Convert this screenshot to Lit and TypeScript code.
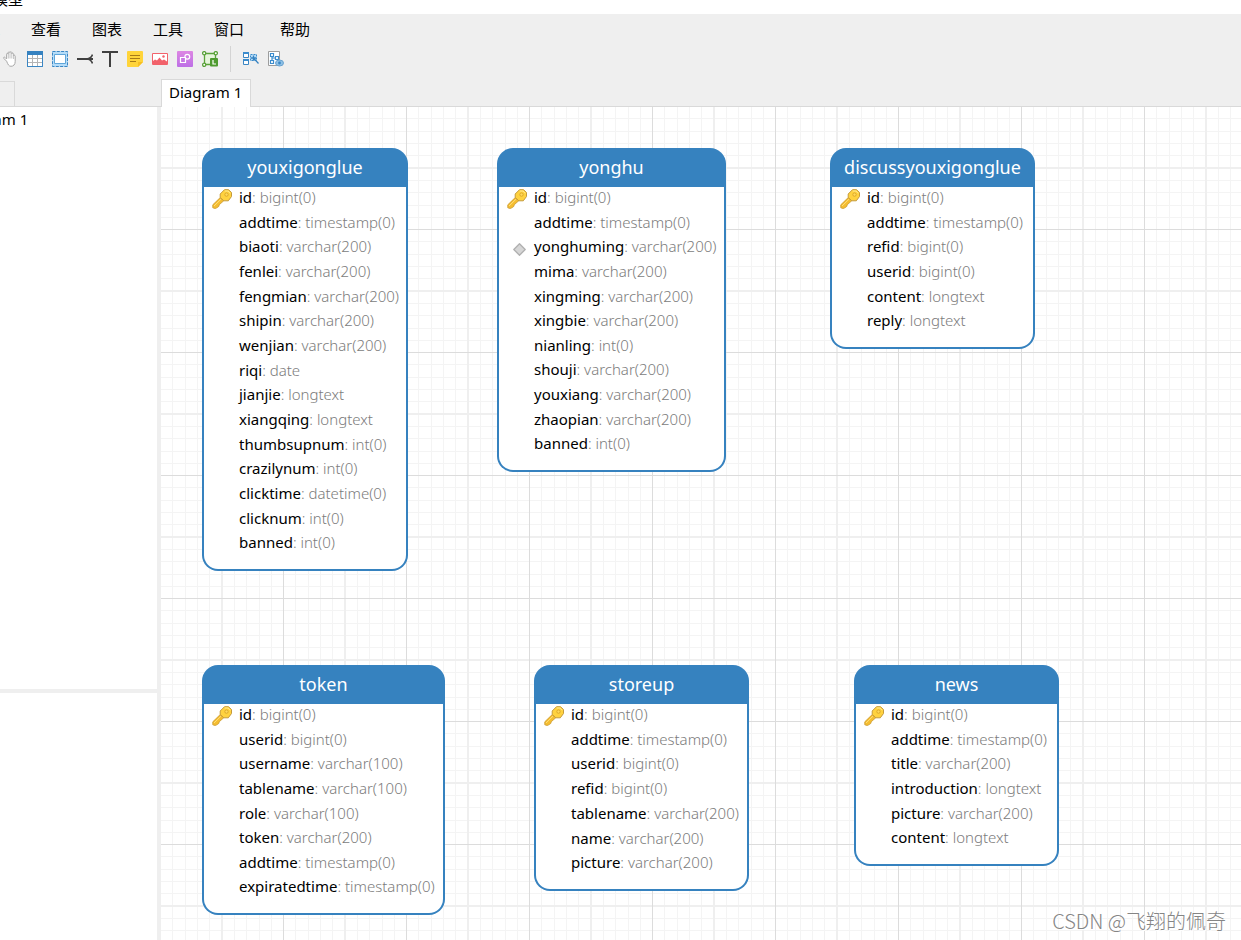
import { LitElement, html, svg, css } from "lit";
import { customElement, property } from "lit/decorators.js";
import { styleMap } from "lit/directives/style-map.js";

type Mark = "key" | "unique";
interface Field {
  name: string;
  type: string;
  mark?: Mark;
}
interface Entity {
  title: string;
  x: number;
  y: number;
  width: number;
  height: number;
  fields: Field[];
}

const fields = (text: string): Field[] =>
  text.split("|").map((part) => {
    const [name, type, mark] = part.trim().split(" ");
    return { name, type, mark: mark as Mark | undefined };
  });

const ENTITIES: Entity[] = [
  {
    title: "youxigonglue", x: 41, y: 41, width: 206, height: 423,
    fields: fields(
      "id bigint(0) key|addtime timestamp(0)|biaoti varchar(200)|fenlei varchar(200)|fengmian varchar(200)|shipin varchar(200)|wenjian varchar(200)|riqi date|jianjie longtext|xiangqing longtext|thumbsupnum int(0)|crazilynum int(0)|clicktime datetime(0)|clicknum int(0)|banned int(0)"
    ),
  },
  {
    title: "yonghu", x: 336, y: 41, width: 229, height: 324,
    fields: fields(
      "id bigint(0) key|addtime timestamp(0)|yonghuming varchar(200) unique|mima varchar(200)|xingming varchar(200)|xingbie varchar(200)|nianling int(0)|shouji varchar(200)|youxiang varchar(200)|zhaopian varchar(200)|banned int(0)"
    ),
  },
  {
    title: "discussyouxigonglue", x: 669, y: 41, width: 205, height: 201,
    fields: fields(
      "id bigint(0) key|addtime timestamp(0)|refid bigint(0)|userid bigint(0)|content longtext|reply longtext"
    ),
  },
  {
    title: "token", x: 41, y: 558, width: 243, height: 250,
    fields: fields(
      "id bigint(0) key|userid bigint(0)|username varchar(100)|tablename varchar(100)|role varchar(100)|token varchar(200)|addtime timestamp(0)|expiratedtime timestamp(0)"
    ),
  },
  {
    title: "storeup", x: 373, y: 558, width: 215, height: 226,
    fields: fields(
      "id bigint(0) key|addtime timestamp(0)|userid bigint(0)|refid bigint(0)|tablename varchar(200)|name varchar(200)|picture varchar(200)"
    ),
  },
  {
    title: "news", x: 693, y: 558, width: 205, height: 201,
    fields: fields(
      "id bigint(0) key|addtime timestamp(0)|title varchar(200)|introduction longtext|picture varchar(200)|content longtext"
    ),
  },
];

const TOOLS = [
  {
    label: "Hand",
    art: svg`<path d="M4.6 10.2 2 7.6C1 6.4 2.2 5.6 3.1 6.5L4.6 8V3.2C4.6 2 6.2 2 6.2 3.2V1.8C6.2.5 8 .5 8 1.8V1.6C8 .4 9.8.4 9.8 1.8V3C9.8 1.8 11.6 1.8 11.6 3.2V5C11.6 4 13.2 4 13.2 5.2V10.5C13.2 13.5 11.5 15.3 9 15.3 6.8 15.3 6 13.6 4.6 10.2Z" fill="#fff" stroke="#a9a9a9"/><path d="M6.3 3V7.5M8 2V7.5M9.8 3V7.5M11.6 4.5V8" stroke="#bdbdbd" stroke-width=".9" fill="none"/>`,
  },
  {
    label: "Table",
    art: svg`<path d="M.5.5H15.5V15.5H.5Z" fill="#fff" stroke="#3b86c3"/><path d="M0 0H16V4H0Z" fill="#3682c0"/><path d="M1 7.5H15M1 11.5H15M5.5 4V15M10.5 4V15" stroke="#b4b4b4" fill="none"/><path d="M.5 4V15.5H15.5V4" fill="none" stroke="#3b86c3"/>`,
  },
  {
    label: "Layer",
    art: svg`<path d="M0 0H16V16H0Z" fill="#b5dcf8"/><path d="M.5.5H15.5V15.5H.5Z" fill="none" stroke="#3b86c3" stroke-dasharray="3 1.3"/><path d="M2.5 3.5H13.5V12.5H2.5Z" fill="#fff" stroke="#5fa6da"/>`,
  },
  {
    label: "Relation",
    art: svg`<path d="M0 8H16" stroke="#404040" stroke-width="2"/><path d="M15.5 3.5C14.5 6.5 12.5 7.8 9.5 8 12.5 8.2 14.5 9.5 15.5 12.5" stroke="#404040" stroke-width="1.6" fill="none"/>`,
  },
  {
    label: "Text",
    art: svg`<path d="M0 1H16M8 1V16" stroke="#404040" stroke-width="2" fill="none"/>`,
  },
  {
    label: "Note",
    art: svg`<path d="M1 0H15Q16 0 16 1V11L11 16H1Q0 16 0 15V1Q0 0 1 0Z" fill="#ffd43a"/><path d="M16 11 11 16V11Z" fill="#f7bf22"/><path d="M3 4.5H13M3 7.5H13M3 10.5H9" stroke="#a77a18" fill="none"/>`,
  },
  {
    label: "Image",
    art: svg`<path d="M.5 2.5H15.5V13.5H.5Z" fill="#fff" stroke="#f2626b"/><path d="M1 10 3 8.5 5 9.5 7.5 6.5 10 9.5 12 8.5 15 10.5V13.5H1Z" fill="#f2626b"/><circle cx="11.5" cy="5.5" r="1.2" fill="#f2626b"/>`,
  },
  {
    label: "Shape",
    art: svg`<defs><linearGradient id="violet" x2="0" y2="1"><stop stop-color="#dd86e3"/><stop offset="1" stop-color="#bd6fe6"/></linearGradient></defs><rect width="16" height="16" rx="1" fill="url(#violet)"/><circle cx="10.3" cy="5.8" r="2.4" fill="none" stroke="#fff" stroke-width="1.2"/><path d="M3.5 6.5H8.5V11.5H3.5Z" fill="#c878e5" stroke="#fff" stroke-width="1.2"/>`,
  },
  {
    label: "Auto layout",
    art: svg`<path d="M2.5 2.5H13.5V13.5H2.5Z" fill="#e6f5dc" stroke="#5aa23a" stroke-width="1.3"/><g fill="#fff" stroke="#5aa23a" stroke-width="1.3"><circle cx="2.2" cy="2.2" r="1.6"/><circle cx="13.8" cy="2.2" r="1.6"/><circle cx="2.2" cy="13.8" r="1.6"/></g><rect x="8" y="7" width="8" height="8.5" rx="1" fill="#4f9b31"/><path d="M11 9V13H14" fill="none" stroke="#fff" stroke-width="1.2"/>`,
  },
];

const VIEW_TOOLS = [
  {
    label: "Select related",
    art: svg`<path d="M.5 1.5H5.5V6.5H.5ZM.5 8.5H5.5V13.5H.5Z" fill="#fff" stroke="#3b86c3"/><path d="M0 1H6V3H0ZM0 8H6V10H0Z" fill="#3b8ccd"/><path d="M7.5 3.5H13.5V9.5H7.5Z" fill="#b5dcf8" stroke="#3b8ccd" stroke-dasharray="2 1"/><path d="M10 6.5 15.5 12.5M10.5 4.5V9.5M8 7H13" stroke="#3682c0" stroke-width="1.3"/>`,
  },
  {
    label: "Overview",
    art: svg`<path d="M.5.5H11.5V14.5H.5Z" fill="#fff" stroke="#9d9d9d"/><path d="M2.5 2.5H5.5V5.5H2.5ZM2.5 9.5H5.5V12.5H2.5ZM7.5 5.5H10.5V8.5H7.5ZM4 5.5V9.5M4 7H7.5" fill="none" stroke="#3b8ccd" stroke-width="1.2"/><ellipse cx="11.5" cy="12" rx="4" ry="3" fill="#8dc0e6" stroke="#6ba3cf"/><circle cx="11.5" cy="12" r="1.4" fill="#3b86c3"/>`,
  },
];

const KEY = svg`<path d="M8.2 8.6.8 15.8V18.8L3.2 19.5 5.2 18.6 6.8 17.4 7.2 15.8 12 11.5Z" fill="#f5bd30" stroke="#cf9f35" stroke-width=".9" stroke-linejoin="round"/><path d="M2 17 9 10.2" stroke="#ffdf7a" fill="none"/><path d="M12.5.7H16.5L19.5 3.5V7.5L16.3 11.8H11.8L8.2 8.5V5Z" fill="#ffd23f" stroke="#c49a3c" stroke-linejoin="round"/><path d="M12.8 2H16L18.3 4.2" fill="none" stroke="#ffe88f"/><circle cx="14.5" cy="5.6" r="1.7" fill="#ffd95a" stroke="#d9a529" stroke-width=".9"/>`;

const UNIQUE = svg`<path d="M6.5.8 12.2 6.5 6.5 12.2.8 6.5Z" fill="#d6d6d6" stroke="#b0b0b0" stroke-linejoin="round" stroke-width="1.3"/>`;

@customElement("entity-card")
export class EntityCard extends LitElement {
  @property({ attribute: false }) entity!: Entity;

  static styles = css`
    :host {
      display: flex;
      flex-direction: column;
      box-sizing: border-box;
      padding: 2px;
      border-radius: 16px;
      background: #3682bf;
    }
    .title {
      margin: 0;
      color: #fff;
      text-align: center;
      font-size: 18px;
      font-weight: 400;
      line-height: 34px;
      padding-bottom: 3px;
    }
    .fields {
      flex: 1;
      display: grid;
      grid-auto-rows: 1fr;
      margin: 0;
      padding: 0 0 12px;
      border-radius: 0 0 14px 14px;
      background: #fff;
      list-style: none;
      font-size: 15px;
      line-height: 20px;
    }
    .field {
      display: grid;
      grid-template-columns: 35px auto;
      min-height: 0;
      white-space: nowrap;
      color: #000;
    }
    .mark {
      display: flex;
      align-items: center;
      padding-left: 8px;
    }
    .type {
      color: #7c7c7c;
      font-weight: 300;
    }
  `;

  private mark(mark?: Mark) {
    if (mark === "key") {
      return html`<span class="mark"><svg width="20" height="20" viewBox="0 0 20 20" role="img" aria-label="Primary key">${KEY}</svg></span>`;
    }
    if (mark === "unique") {
      return html`<span class="mark"><svg width="20" height="16" viewBox="-6 -2 20 16" role="img" aria-label="Unique">${UNIQUE}</svg></span>`;
    }
    return html`<span></span>`;
  }

  render() {
    return html`
      <h2 class="title">${this.entity.title}</h2>
      <ul class="fields">
        ${this.entity.fields.map(
          (f) => html`<li class="field">${this.mark(f.mark)}<span>${f.name}<span class="type">: ${f.type}</span></span></li>`
        )}
      </ul>
    `;
  }
}

@customElement("app-root")
export class AppRoot extends LitElement {
  static styles = css`
    :host {
      display: flex;
      flex-direction: column;
      height: 100vh;
      overflow: hidden;
      background: #efefef;
      color: #000;
      font-family: "Noto Sans", "Noto Sans CJK SC", sans-serif;
      font-size: 15px;
    }
    button {
      margin: 0;
      padding: 0;
      border: 0;
      background: none;
      color: inherit;
      font: inherit;
    }
    .titlebar {
      display: flex;
      align-items: flex-end;
      height: 14px;
      margin-left: -7px;
      background: #fff;
      line-height: 30px;
      overflow: hidden;
    }
    .menubar {
      display: flex;
      gap: 36px;
      margin-left: -30px;
      line-height: 30px;
    }
    .menus {
      display: flex;
      gap: 31px;
    }
    .toolbar {
      display: flex;
      align-items: center;
      height: 30px;
      margin-left: -3px;
    }
    .tool {
      display: grid;
      place-items: center;
      width: 25px;
      height: 26px;
    }
    .separator {
      width: 1px;
      height: 26px;
      margin: 0 7px 0 8px;
      background: #d4d4d4;
    }
    .tabs {
      display: flex;
      align-items: flex-end;
      height: 32px;
      border-bottom: 1px solid #d9d9d9;
    }
    .side-tabs {
      display: flex;
      width: 161px;
    }
    .side-tab {
      width: 15px;
      height: 25px;
      border: solid #d9d9d9;
      border-width: 1px 1px 0 0;
    }
    .tab {
      height: 28px;
      margin-bottom: -1px;
      padding: 0 8px 4px 7px;
      border: 1px solid #d9d9d9;
      border-bottom: 0;
      background: #fff;
    }
    .workspace {
      flex: 1;
      display: flex;
      min-height: 0;
    }
    .sidebar {
      display: flex;
      flex-direction: column;
      gap: 4px;
      width: 157px;
      margin-right: 4px;
    }
    .tree {
      flex: 582;
      background: #fff;
      overflow: hidden;
    }
    .node {
      display: block;
      margin-left: -45px;
      color: inherit;
      line-height: 24px;
      text-decoration: none;
    }
    .overview {
      flex: 247;
      background: #fff;
    }
    .canvas {
      flex: 1;
      position: relative;
      background: #fff;
      overflow: hidden;
    }
    .grid {
      display: block;
      width: 100%;
      height: 100%;
    }
    .card {
      position: absolute;
    }
    .watermark {
      position: absolute;
      right: 15px;
      bottom: 5px;
      color: #858585;
      font-family: "Noto Sans CJK SC", sans-serif;
      font-size: 20px;
      font-weight: 300;
      line-height: 28px;
      text-shadow: 1px 1px #fff;
    }
  `;

  private tool(t: { label: string; art: unknown }) {
    return html`<button class="tool" aria-label=${t.label}><svg width="16" height="16" viewBox="0 0 16 16">${t.art}</svg></button>`;
  }

  render() {
    return html`
      <header class="titlebar">模型</header>
      <nav class="menubar">
        <div class="menus">
          ${["编辑", "查看", "图表", "工具", "窗口"].map((m) => html`<button>${m}</button>`)}
        </div>
        <button>帮助</button>
      </nav>
      <div class="toolbar" role="toolbar">
        ${TOOLS.map((t) => this.tool(t))}
        <span class="separator"></span>
        ${VIEW_TOOLS.map((t) => this.tool(t))}
      </div>
      <div class="tabs">
        <div class="side-tabs"><button class="side-tab" aria-label="Explorer"></button></div>
        <button class="tab">Diagram 1</button>
      </div>
      <div class="workspace">
        <aside class="sidebar">
          <div class="tree"><a class="node" href="#diagram-1">Diagram 1</a></div>
          <div class="overview"></div>
        </aside>
        <main class="canvas">
          <svg class="grid" aria-hidden="true">
            <defs>
              <pattern id="cells" width="123" height="123" patternUnits="userSpaceOnUse" y="-1" x="-1">
                <path
                  d="M12.5 0V123M25.5 0V123M37.5 0V123M49.5 0V123M74.5 0V123M86.5 0V123M99.5 0V123M111.5 0V123M0 12.5H123M0 25.5H123M0 37.5H123M0 49.5H123M0 74.5H123M0 86.5H123M0 99.5H123M0 111.5H123"
                  stroke="#f4f4f4"
                />
                <path d="M62 0V123M0 62H123" stroke="#efefef" stroke-width="2" />
                <path d="M.5 0V123M0 .5H123" stroke="#dcdcdc" />
              </pattern>
            </defs>
            <rect width="100%" height="100%" fill="url(#cells)" />
          </svg>
          ${ENTITIES.map(
            (e) => html`<entity-card
              class="card"
              .entity=${e}
              style=${styleMap({ left: `${e.x}px`, top: `${e.y}px`, width: `${e.width}px`, height: `${e.height}px` })}
            ></entity-card>`
          )}
          <span class="watermark">CSDN @飞翔的佩奇</span>
        </main>
      </div>
    `;
  }
}
